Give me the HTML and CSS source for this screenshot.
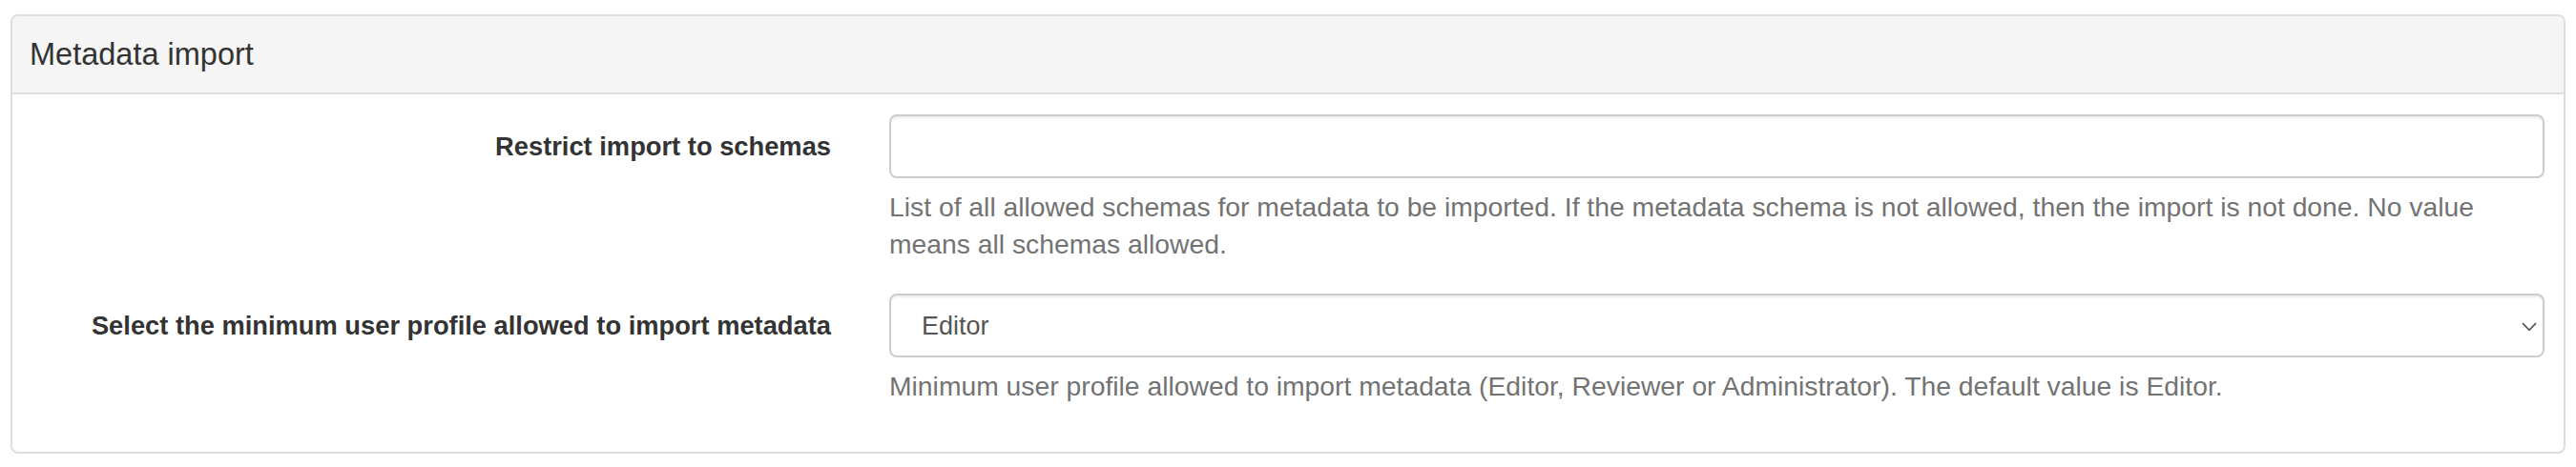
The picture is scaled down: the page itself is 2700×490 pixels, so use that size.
FILE: index.html
```html
<!DOCTYPE html>
<html lang="en">
<head>
    <meta charset="UTF-8">
    <meta name="viewport" content="width=device-width, initial-scale=1.0">
    <title>Metadata import</title>
    <link rel="stylesheet" href="styles.css">
</head>
<body>
    <div class="panel">
        <div class="panel-heading">Metadata import</div>
        <div class="panel-body">
            <form class="settings-form">
                <div class="form-group">
                    <label class="control-label" for="import_schemas">Restrict import to schemas</label>
                    <div class="control">
                        <input type="text" id="import_schemas" class="form-control">
                        <p class="help-block">List of all allowed schemas for metadata to be imported. If the metadata schema is not allowed, then the import is not done. No value means all schemas allowed.</p>
                    </div>
                </div>

                <div class="form-group">
                    <label class="control-label" for="import_profile">Select the minimum user profile allowed to import metadata</label>
                    <div class="control">
                        <div class="select-wrap">
                            <select id="import_profile" class="form-control">
                                <option>Editor</option>
                                <option>Reviewer</option>
                                <option>Administrator</option>
                            </select>
                            <svg class="chevron" width="16" height="10" viewBox="0 0 16 10">
                                <polyline points="1,1.2 8,8.4 15,1.2" fill="none" stroke="#555" stroke-width="1.7"/>
                            </svg>
                        </div>
                        <p class="help-block">Minimum user profile allowed to import metadata (Editor, Reviewer or Administrator). The default value is Editor.</p>
                    </div>
                </div>
            </form>
        </div>
    </div>
</body>
</html>
```

FILE: styles.css
```css
/* Dasar */
body {
    font-family: "Liberation Sans", Arial, sans-serif;
    color: #333;
    margin: 0;
    padding: 15px 11px;
    background: #fff;
}

/* Panel */
.panel {
    border: 2px solid #ddd;
    border-radius: 8px;
    background: #fff;
}

.panel-heading {
    background-color: #f5f5f5;
    border-bottom: 2px solid #ddd;
    border-radius: 6px 6px 0 0;
    padding: 23px 18px;
    font-size: 32.5px;
    line-height: 34px;
}

.panel-body {
    padding: 21px 20px 49px;
}

/* Form */
.form-group {
    display: grid;
    grid-template-columns: 838px 1fr;
    column-gap: 61px;
    margin-bottom: 32px;
}

.form-group:last-child {
    margin-bottom: 0;
}

.control-label {
    text-align: right;
    font-weight: bold;
    font-size: 27.3px;
    line-height: 1.43;
    padding-top: 14px;
}

.form-control {
    display: block;
    box-sizing: border-box;
    width: 100%;
    height: 67px;
    margin: 0;
    padding: 0 23px;
    font-family: inherit;
    font-size: 27px;
    color: #555;
    background-color: #fff;
    border: 2px solid #ccc;
    border-radius: 8px;
    box-shadow: inset 0 2px 2px rgba(0, 0, 0, .075);
    outline: none;
}

.select-wrap {
    position: relative;
}

select.form-control {
    appearance: none;
    -webkit-appearance: none;
    padding-left: 32px;
}

.chevron {
    position: absolute;
    right: 8px;
    top: 30px;
    pointer-events: none;
}

.help-block {
    margin: 11px 0 0;
    font-size: 28.3px;
    line-height: 39px;
    color: #737373;
}
```
